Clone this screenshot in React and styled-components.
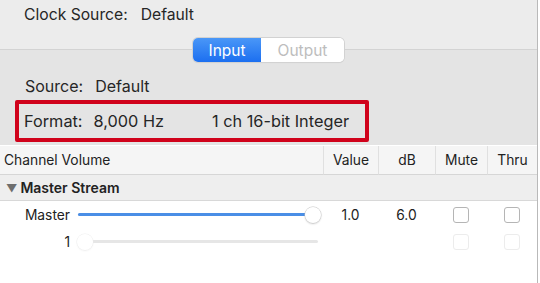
import React from "react";
import styled, { createGlobalStyle } from "styled-components";

const GlobalStyle = createGlobalStyle`
  html, body {
    margin: 0;
    padding: 0;
    background: #ffffff;
  }
  body {
    font-family: Inter, "Noto Sans", "Liberation Sans", sans-serif;
    color: #222;
  }
`;

// Window panel
const Panel = styled.div`
  width: 537px;
  height: 283px;
  border-right: 1px solid #b9b9b9;
  background: #ffffff;
  overflow: hidden;
`;

const TopBar = styled.div`
  height: 50px;
  background: #ececec;
  border-bottom: 1px solid #d3d3d3;
  box-sizing: border-box;
  padding: 4px 0 0 24px;
`;

const Pane = styled.div`
  background: #e4e4e4;
  height: 95px;
  display: flex;
  flex-direction: column;
`;

const InfoLine = styled.div`
  font-size: ${p => p.size || 16}px;
  line-height: 22px;
  display: flex;
  align-items: center;
  color: #262626;
`;

const Label = styled.span`
  margin-right: ${p => p.gap || 13}px;
`;

const Segmented = styled.div`
  align-self: center;
  margin-top: -12px;
  display: flex;
  height: 24px;
  border-radius: 5px;
  background: #fff;
  box-shadow: 0 0 0 1px #d2d2d2, 0 1px 1px rgba(0, 0, 0, 0.08);
  overflow: hidden;
  font-size: 15.5px;
`;

const Segment = styled.div`
  width: ${p => p.w}px;
  display: flex;
  align-items: center;
  justify-content: center;
  color: ${p => (p.active ? "#fff" : "#bdbdbd")};
  background: ${p => (p.active ? "linear-gradient(#4a97f7, #1c6ff0)" : "#fff")};
`;

const SourceLine = styled(InfoLine)`
  padding-left: 25px;
  margin-top: 13px;
`;

const FormatBox = styled.div`
  margin: 3px 0 0 15px;
  width: 354px;
  height: 42px;
  box-sizing: border-box;
  border: 4px solid #d0021b;
  border-radius: 2px;
  padding-left: 5px;
  display: flex;
  align-items: center;
`;

// Table
const Grid = styled.div`
  display: grid;
  grid-template-columns: 323px 55px 57px 52px 50px;
  font-size: 13.5px;
`;

const HeadCell = styled.div`
  height: 29px;
  margin-top: 1px;
  display: flex;
  align-items: center;
  justify-content: ${p => (p.left ? "flex-start" : "center")};
  padding-left: ${p => (p.left ? 4 : 0)}px;
  background: #f5f5f5;
  border-bottom: 1px solid #d6d6d6;
  border-left: ${p => (p.left ? "none" : "1px solid #e0e0e0")};
  box-sizing: border-box;
  color: #222;
  font-size: 13.8px;
`;

const GroupRow = styled.div`
  grid-column: 1 / -1;
  height: 26px;
  background: #eeeeee;
  border-bottom: 1px solid #d8d8d8;
  box-sizing: border-box;
  display: flex;
  align-items: center;
  padding-left: 6px;
  font-weight: 600;
  font-size: 14px;
`;

const Arrow = styled.span`
  color: #6e6e6e;
  font-size: 11px;
  margin-right: 3px;
`;

const NameCell = styled.div`
  height: 27px;
  display: flex;
  align-items: center;
`;

const RowLabel = styled.div`
  width: 70px;
  text-align: right;
  margin-right: 8px;
  font-size: 13.8px;
`;

const Cell = styled.div`
  height: 27px;
  display: flex;
  align-items: center;
  justify-content: center;
  font-size: 13.8px;
`;

const Track = styled.div`
  position: relative;
  width: 240px;
  height: 3px;
  border-radius: 2px;
  background: ${p => (p.disabled ? "#e6e6e6" : "#dcdcdc")};
`;

const Fill = styled.div`
  height: 100%;
  border-radius: 2px;
  background: #4a8ee6;
`;

const Thumb = styled.div`
  position: absolute;
  top: 50%;
  width: 16px;
  height: 16px;
  margin: -8px 0 0 -8px;
  border-radius: 50%;
  background: #fff;
  box-shadow: ${p =>
    p.disabled
      ? "0 0 0 0.5px #eee, 0 1px 2px rgba(0,0,0,0.06)"
      : "0 0 0 0.5px #c8c8c8, 0 1px 2px rgba(0,0,0,0.2)"};
`;

const Check = styled.div`
  width: 14px;
  height: 14px;
  border-radius: 3px;
  background: #fff;
  border: 1px solid ${p => (p.disabled ? "#ececec" : "#b5b5b5")};
`;

const Slider = ({ value, disabled }) => (
  <Track disabled={disabled}>
    {!disabled && <Fill style={{ width: `${value * 100}%` }} />}
    <Thumb disabled={disabled} style={{ left: `${value * 97 + 3}%` }} />
  </Track>
);

const rows = [
  { name: "Master", value: 0.98, v: "1.0", db: "6.0", disabled: false },
  { name: "1", value: 0, v: "", db: "", disabled: true },
];

export default function App() {
  return (
    <>
      <GlobalStyle />
      <Panel>
        <TopBar>
          <InfoLine size={15.7}>
            <Label gap={13}>Clock Source:</Label>
            <span>Default</span>
          </InfoLine>
        </TopBar>
        <Pane>
          <Segmented>
            <Segment active w={68}>Input</Segment>
            <Segment w={83}>Output</Segment>
          </Segmented>
          <SourceLine>
            <Label gap={12}>Source:</Label>
            <span>Default</span>
          </SourceLine>
          <FormatBox>
            <InfoLine size={16.3}>
              <Label gap={11}>Format:</Label>
              <Label gap={48}>8,000 Hz</Label>
              <span>1 ch 16-bit Integer</span>
            </InfoLine>
          </FormatBox>
        </Pane>
        <Grid>
          <HeadCell left>Channel Volume</HeadCell>
          <HeadCell>Value</HeadCell>
          <HeadCell>dB</HeadCell>
          <HeadCell>Mute</HeadCell>
          <HeadCell>Thru</HeadCell>
          <GroupRow>
            <Arrow>▼</Arrow>Master Stream
          </GroupRow>
          {rows.map(r => (
            <React.Fragment key={r.name}>
              <NameCell>
                <RowLabel>{r.name}</RowLabel>
                <Slider value={r.value} disabled={r.disabled} />
              </NameCell>
              <Cell>{r.v}</Cell>
              <Cell>{r.db}</Cell>
              <Cell><Check disabled={r.disabled} /></Cell>
              <Cell><Check disabled={r.disabled} /></Cell>
            </React.Fragment>
          ))}
        </Grid>
      </Panel>
    </>
  );
}
